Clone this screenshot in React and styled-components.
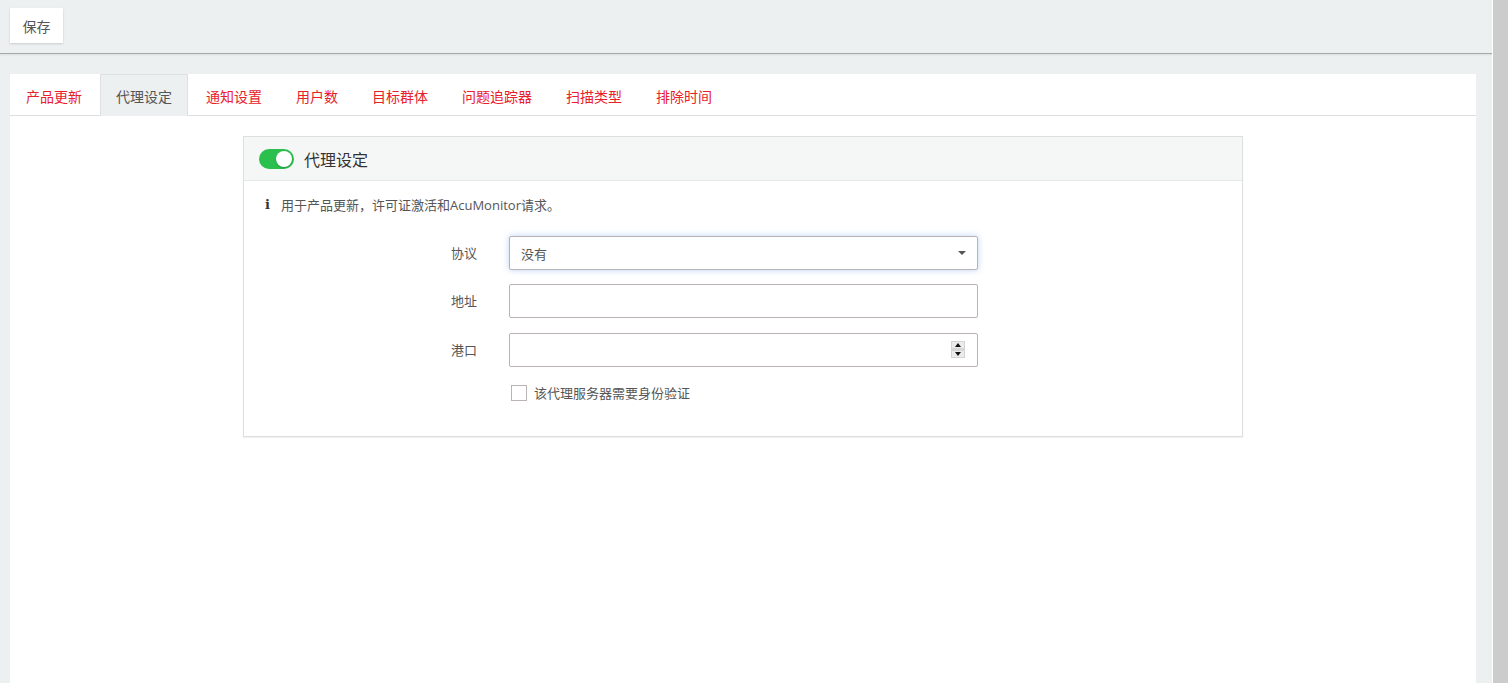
import React, { useState } from "react";
import styled, { createGlobalStyle } from "styled-components";

const GlobalStyle = createGlobalStyle`
  html, body {
    margin: 0;
    padding: 0;
    height: 100%;
    overflow: hidden;
  }
  body {
    font-family: "Open Sans", "Noto Sans CJK SC", sans-serif;
    font-size: 14px;
    color: #555;
    background: #ecf0f1;
  }
  #root {
    height: 100%;
  }
`;

const Shell = styled.div`
  display: flex;
  height: 683px;
`;

const Main = styled.div`
  flex: 1;
  display: flex;
  flex-direction: column;
  background: #ecf0f1;
  min-width: 0;
`;

const ScrollTrack = styled.div`
  width: 15px;
  border-left: 1px solid #fff;
  background: #cccccc;
`;

const Toolbar = styled.div`
  height: 54px;
  box-sizing: border-box;
  padding: 8px 10px 0;
  border-bottom: 1px solid #a6a8a8;
  box-shadow: 0 1px 2px rgba(0, 0, 0, 0.08);
  background: #ecf0f1;
`;

const SaveButton = styled.button`
  width: 53px;
  height: 35px;
  border: none;
  background: #fff;
  color: #555;
  font-family: inherit;
  font-size: 14px;
  box-shadow: 0 1px 2px rgba(0, 0, 0, 0.15);
  cursor: pointer;
  padding: 0;
`;

const Panel = styled.div`
  flex: 1;
  margin: 20px 16px 0 10px;
  background: #fff;
  display: flex;
  flex-direction: column;
`;

const TabBar = styled.ul`
  list-style: none;
  margin: 0;
  padding: 0;
  display: flex;
  height: 42px;
  box-sizing: border-box;
  border-bottom: 1px solid #dddddd;
`;

const Tab = styled.li`
  box-sizing: border-box;
  height: 42px;
  padding: 0 15px;
  margin-right: 2px;
  display: flex;
  align-items: center;
  font-size: 14px;
  color: ${(p) => (p.$active ? "#555" : "#e8202a")};
  background: ${(p) => (p.$active ? "#ecf0f1" : "transparent")};
  border: 1px solid ${(p) => (p.$active ? "#dde1e2" : "transparent")};
  border-bottom: none;
  cursor: pointer;
`;

const Card = styled.section`
  width: 1000px;
  box-sizing: border-box;
  margin: 20px auto 0;
  border: 1px solid #dcdfe0;
  box-shadow: 0 1px 1px rgba(0, 0, 0, 0.05);
`;

const CardHeader = styled.header`
  height: 44px;
  box-sizing: border-box;
  display: flex;
  align-items: center;
  gap: 10px;
  padding: 0 15px;
  background: #f5f6f6;
  border-bottom: 1px solid #e6e8e8;
  font-size: 16px;
  color: #333;
`;

const Switch = styled.button`
  position: relative;
  width: 35px;
  height: 20px;
  border-radius: 10px;
  border: none;
  padding: 0;
  background: ${(p) => (p.$on ? "#2bbf4e" : "#ccc")};
  cursor: pointer;

  &::after {
    content: "";
    position: absolute;
    top: 2px;
    left: ${(p) => (p.$on ? "17px" : "2px")};
    width: 16px;
    height: 16px;
    border-radius: 50%;
    background: #fff;
    box-shadow: 0 1px 2px rgba(0, 0, 0, 0.2);
  }
`;

const CardBody = styled.div`
  padding: 14px 20px 34px;
`;

const Info = styled.p`
  margin: 0 0 22px;
  display: flex;
  align-items: center;
  gap: 10px;
  font-size: 13px;
  color: #555;
`;

const InfoIcon = styled.span`
  font-family: "DejaVu Serif", serif;
  font-weight: bold;
  font-size: 13px;
  color: #333;
  width: 7px;
  text-align: center;
`;

const Form = styled.div`
  display: grid;
  grid-template-columns: 58px 469px;
  row-gap: 14px;
  padding-left: 187px;
  align-items: center;
`;

const Label = styled.label`
  font-size: 13px;
  color: #555;
  margin-top: -1px;
`;

const fieldBase = `
  box-sizing: border-box;
  height: 34px;
  width: 100%;
  border: 1px solid #b9b2b6;
  border-radius: 2px;
  background: #fff;
  font-family: inherit;
  font-size: 13px;
  color: #555;
`;

const SelectBox = styled.div`
  ${fieldBase}
  display: flex;
  align-items: center;
  justify-content: space-between;
  padding: 0 11px;
  box-shadow: 0 0 6px rgba(102, 160, 230, 0.45);
  cursor: pointer;
`;

const Caret = styled.span`
  width: 0;
  height: 0;
  border-left: 4px solid transparent;
  border-right: 4px solid transparent;
  border-top: 4px solid #555;
`;

const TextInput = styled.input`
  ${fieldBase}
  display: block;
  padding: 0 11px;
  outline: none;
  -moz-appearance: textfield;

  &::-webkit-inner-spin-button,
  &::-webkit-outer-spin-button {
    -webkit-appearance: none;
    margin: 0;
  }
`;

const NumberWrap = styled.div`
  position: relative;
  margin-top: 1px;
`;

const Spinner = styled.div`
  position: absolute;
  right: 13px;
  top: 8px;
  width: 14px;
  height: 17px;
  display: flex;
  flex-direction: column;
  gap: 1px;
  background: #d9d9d9;
`;

const SpinHalf = styled.span`
  flex: 1;
  display: flex;
  align-items: center;
  justify-content: center;
  background: #ececec;
  border: 1px solid #d4d4d4;

  &::before {
    content: "";
    border-left: 3px solid transparent;
    border-right: 3px solid transparent;
    ${(p) =>
      p.$up ? "border-bottom: 4px solid #111;" : "border-top: 4px solid #111;"}
  }
`;

const CheckRow = styled.label`
  grid-column: 2;
  display: flex;
  align-items: center;
  gap: 7px;
  padding-left: 2px;
  margin-top: 2px;
  font-size: 13px;
  color: #555;
  cursor: pointer;
`;

const Check = styled.span`
  width: 14px;
  height: 14px;
  border: 1px solid #b9b2b6;
  background: #fff;
`;

const tabs = [
  "产品更新",
  "代理设定",
  "通知设置",
  "用户数",
  "目标群体",
  "问题追踪器",
  "扫描类型",
  "排除时间",
];

export default function App() {
  const [active, setActive] = useState(1);
  const [on, setOn] = useState(true);

  return (
    <>
      <GlobalStyle />
      <Shell>
        <Main>
          <Toolbar>
            <SaveButton>保存</SaveButton>
          </Toolbar>
          <Panel>
            <TabBar>
              {tabs.map((t, i) => (
                <Tab key={t} $active={i === active} onClick={() => setActive(i)}>
                  {t}
                </Tab>
              ))}
            </TabBar>
            <Card>
              <CardHeader>
                <Switch $on={on} onClick={() => setOn(!on)} aria-label="toggle" />
                代理设定
              </CardHeader>
              <CardBody>
                <Info>
                  <InfoIcon>i</InfoIcon>
                  用于产品更新，许可证激活和AcuMonitor请求。
                </Info>
                <Form>
                  <Label>协议</Label>
                  <SelectBox>
                    <span>没有</span>
                    <Caret />
                  </SelectBox>
                  <Label>地址</Label>
                  <TextInput type="text" />
                  <Label>港口</Label>
                  <NumberWrap>
                    <TextInput type="number" />
                    <Spinner>
                      <SpinHalf $up />
                      <SpinHalf />
                    </Spinner>
                  </NumberWrap>
                  <CheckRow>
                    <Check />
                    该代理服务器需要身份验证
                  </CheckRow>
                </Form>
              </CardBody>
            </Card>
          </Panel>
        </Main>
        <ScrollTrack />
      </Shell>
    </>
  );
}
